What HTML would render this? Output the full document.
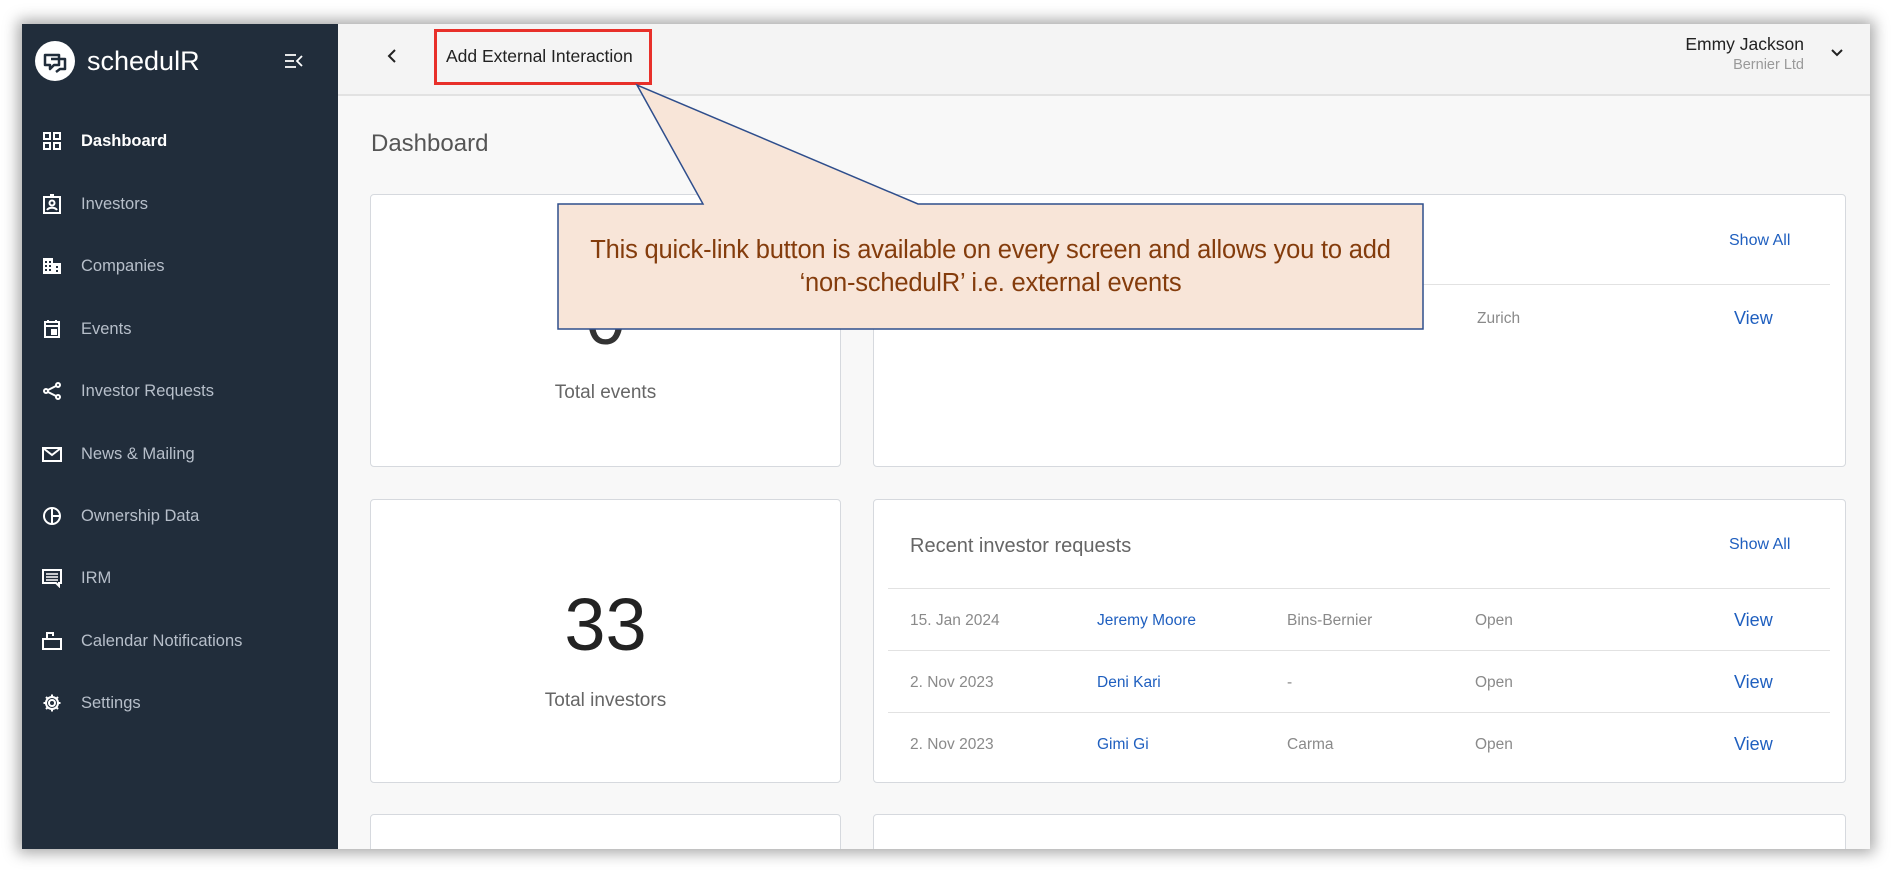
<!DOCTYPE html>
<html><head><meta charset="utf-8"><style>
*{margin:0;padding:0;box-sizing:border-box}
body{width:1896px;height:872px;background:#fff;position:relative;overflow:hidden;font-family:"Liberation Sans",Arial,sans-serif}
.a{position:absolute;white-space:nowrap}
#frame{position:absolute;left:22px;top:24px;width:1848px;height:825px;background:#f8f8f8;box-shadow:0 0 14px 4px rgba(0,0,0,.35);overflow:hidden}
#side{position:absolute;left:0;top:0;width:316px;height:825px;background:#212d3b}
#hdr{position:absolute;left:316px;top:0;right:0;height:72px;background:#f4f4f4;border-bottom:2px solid #e2e2e2}
.nav{position:absolute;left:0;color:#b7bfca;font-size:16.5px}
.nav svg{position:absolute;left:20px;top:-11px}
.nav span{position:absolute;left:59px;top:-10px;white-space:nowrap}
.card{position:absolute;background:#fff;border:1px solid #d6d9de;border-radius:4px}
.blue{color:#1f5fbf}
.g{color:#8a8a8a;font-size:15.5px}
.hr{position:absolute;height:1px;background:#e2e2e2}
</style></head><body>
<div id="frame">
 <div id="side">
  <svg class="a" style="left:12px;top:16px" width="42" height="42" viewBox="0 0 42 42"><circle cx="21" cy="21" r="20" fill="#fff"/><path d="M11 15h14v10h-5l-4 4v-4h-5z" fill="none" stroke="#212d3b" stroke-width="2.5" stroke-linejoin="round"/><path d="M17 19h14v10h-5l-4 3" fill="none" stroke="#212d3b" stroke-width="2.5" stroke-linejoin="round"/></svg>
  <div class="a" style="left:65px;top:22px;color:#fff;font-size:27px">schedulR</div>
  <svg class="a" style="left:262px;top:29px" width="20" height="16" viewBox="0 0 20 16" stroke="#fff" stroke-width="1.8" fill="none"><path d="M1 2h11M1 8h9M1 14h11M18 3l-5 5 5 5"/></svg>
  <div class="nav" style="top:118px;color:#fff;font-weight:bold"><svg width="20" height="20" viewBox="0 0 20 20" fill="none" stroke="#fff" stroke-width="2"><rect x="2" y="2" width="6" height="6"/><rect x="12" y="2" width="6" height="6"/><rect x="2" y="12" width="6" height="6"/><rect x="12" y="12" width="6" height="6"/></svg><span>Dashboard</span></div>
  <div class="nav" style="top:181px"><svg width="20" height="20" viewBox="0 0 20 20" fill="none" stroke="#fff" stroke-width="2"><rect x="2" y="3" width="16" height="16"/><circle cx="10" cy="9" r="2.5"/><path d="M5 16c2-3 8-3 10 0M8 1h4"/></svg><span>Investors</span></div>
  <div class="nav" style="top:243px"><svg width="20" height="20" viewBox="0 0 20 20" fill="#fff"><path d="M1 2h10v16H1zM11 7h8v11h-8z"/><g fill="#212d3b"><rect x="3" y="5" width="2" height="2"/><rect x="7" y="5" width="2" height="2"/><rect x="3" y="9" width="2" height="2"/><rect x="7" y="9" width="2" height="2"/><rect x="3" y="13" width="2" height="2"/><rect x="7" y="13" width="2" height="2"/><rect x="14" y="10" width="2" height="2"/><rect x="14" y="14" width="2" height="2"/></g></svg><span>Companies</span></div>
  <div class="nav" style="top:306px"><svg width="20" height="20" viewBox="0 0 20 20" fill="none" stroke="#fff" stroke-width="2"><rect x="3" y="3" width="14" height="15"/><path d="M3 7h14M6 1v3M14 1v3"/><rect x="10" y="11" width="4" height="4" fill="#fff"/></svg><span>Events</span></div>
  <div class="nav" style="top:368px"><svg width="20" height="20" viewBox="0 0 20 20" fill="none" stroke="#fff" stroke-width="2"><circle cx="16" cy="4" r="2"/><circle cx="4" cy="10" r="2"/><circle cx="16" cy="16" r="2"/><path d="M6 9l8-4M6 11l8 4"/></svg><span>Investor Requests</span></div>
  <div class="nav" style="top:431px"><svg width="20" height="20" viewBox="0 0 20 20" fill="none" stroke="#fff" stroke-width="2"><rect x="1" y="4" width="18" height="13"/><path d="M1 4l9 7 9-7"/></svg><span>News &amp; Mailing</span></div>
  <div class="nav" style="top:493px"><svg width="20" height="20" viewBox="0 0 20 20" fill="none" stroke="#fff" stroke-width="2"><circle cx="10" cy="10" r="8"/><path d="M10 2v16M10 10h8"/></svg><span>Ownership Data</span></div>
  <div class="nav" style="top:555px"><svg width="20" height="20" viewBox="0 0 20 20" fill="none" stroke="#fff" stroke-width="2"><path d="M1 2h18v13h-2v3l-3-3H1z"/><path d="M4 6h12M4 9h12M4 12h12" stroke-width="1.5"/></svg><span>IRM</span></div>
  <div class="nav" style="top:618px"><svg width="20" height="20" viewBox="0 0 20 20" fill="none" stroke="#fff" stroke-width="2"><path d="M1 8h18v10H1zM5 8V2h6v3"/></svg><span>Calendar Notifications</span></div>
  <div class="nav" style="top:680px"><svg width="20" height="20" viewBox="0 0 20 20" fill="none" stroke="#fff" stroke-width="2"><circle cx="10" cy="10" r="3"/><path d="M10 1.5v3M10 15.5v3M1.5 10h3M15.5 10h3M4 4l2 2M14 14l2 2M4 16l2-2M14 6l2-2"/><circle cx="10" cy="10" r="6"/></svg><span>Settings</span></div>
 </div>
 <div id="hdr">
  <svg class="a" style="left:48px;top:24px" width="12" height="16" viewBox="0 0 12 16"><path d="M9 2L3 8l6 6" fill="none" stroke="#222" stroke-width="2"/></svg>
  <div class="a" style="left:96px;top:5px;width:218px;height:56px;border:3px solid #e8302a"></div>
  <div class="a" style="left:108px;top:22px;font-size:17.5px;color:#222">Add External Interaction</div>
  <div class="a" style="right:66px;top:10px;font-size:17.5px;color:#222">Emmy Jackson</div>
  <div class="a" style="right:66px;top:33px;font-size:14.5px;color:#999">Bernier Ltd</div>
  <svg class="a" style="right:26px;top:24px" width="14" height="10" viewBox="0 0 14 10"><path d="M2 2l5 5 5-5" fill="none" stroke="#222" stroke-width="2"/></svg>
 </div>
 <div class="a" style="left:349px;top:106px;font-size:24px;color:#555">Dashboard</div>
 <div class="card" style="left:348px;top:170px;width:471px;height:273px"></div>
 <div class="a" style="left:348px;top:255px;width:471px;text-align:center;font-size:72px;color:#333;font-weight:300">0</div>
 <div class="a" style="left:348px;top:358px;width:471px;text-align:center;font-size:19px;color:#666">Total events</div>
 <div class="card" style="left:851px;top:170px;width:973px;height:273px"></div>
 <div class="a blue" style="left:1707px;top:208px;font-size:16px">Show All</div>
 <div class="hr" style="left:866px;top:260px;width:942px"></div>
 <div class="a g" style="left:1455px;top:286px">Zurich</div>
 <div class="a blue" style="left:1712px;top:284px;font-size:18px">View</div>
 <div class="card" style="left:348px;top:475px;width:471px;height:284px"></div>
 <div class="a" style="left:348px;top:558px;width:471px;text-align:center;font-size:74px;color:#222;font-weight:300">33</div>
 <div class="a" style="left:348px;top:666px;width:471px;text-align:center;font-size:19px;color:#666">Total investors</div>
 <div class="card" style="left:851px;top:475px;width:973px;height:284px"></div>
 <div class="a" style="left:888px;top:511px;font-size:20px;color:#666">Recent investor requests</div>
 <div class="a blue" style="left:1707px;top:512px;font-size:16px">Show All</div>
 <div class="hr" style="left:866px;top:564px;width:942px"></div>
 <div class="hr" style="left:866px;top:626px;width:942px"></div>
 <div class="hr" style="left:866px;top:688px;width:942px"></div>
 <div class="a g" style="left:888px;top:588px">15. Jan 2024</div><div class="a blue" style="left:1075px;top:588px;font-size:15.5px">Jeremy Moore</div><div class="a g" style="left:1265px;top:588px">Bins-Bernier</div><div class="a g" style="left:1453px;top:588px">Open</div><div class="a blue" style="left:1712px;top:586px;font-size:18px">View</div>
 <div class="a g" style="left:888px;top:650px">2. Nov 2023</div><div class="a blue" style="left:1075px;top:650px;font-size:15.5px">Deni Kari</div><div class="a g" style="left:1265px;top:650px">-</div><div class="a g" style="left:1453px;top:650px">Open</div><div class="a blue" style="left:1712px;top:648px;font-size:18px">View</div>
 <div class="a g" style="left:888px;top:712px">2. Nov 2023</div><div class="a blue" style="left:1075px;top:712px;font-size:15.5px">Gimi Gi</div><div class="a g" style="left:1265px;top:712px">Carma</div><div class="a g" style="left:1453px;top:712px">Open</div><div class="a blue" style="left:1712px;top:710px;font-size:18px">View</div>
 <div class="card" style="left:348px;top:790px;width:471px;height:60px"></div>
 <div class="card" style="left:851px;top:790px;width:973px;height:60px"></div>
</div>
<svg class="a" style="left:0;top:0" width="1896" height="872">
 <path d="M558 204H703L637 85L918 204H1423V329H558Z" fill="#f8e5d8" stroke="#2f4e8c" stroke-width="1.5"/>
</svg>
<div class="a" style="left:558px;top:234px;width:865px;text-align:center;font-size:25.5px;line-height:33px;color:#843c0c;white-space:normal;letter-spacing:-0.2px">This quick-link button is available on every screen and allows you to add<br>‘non-schedulR’ i.e. external events</div>
</body></html>
